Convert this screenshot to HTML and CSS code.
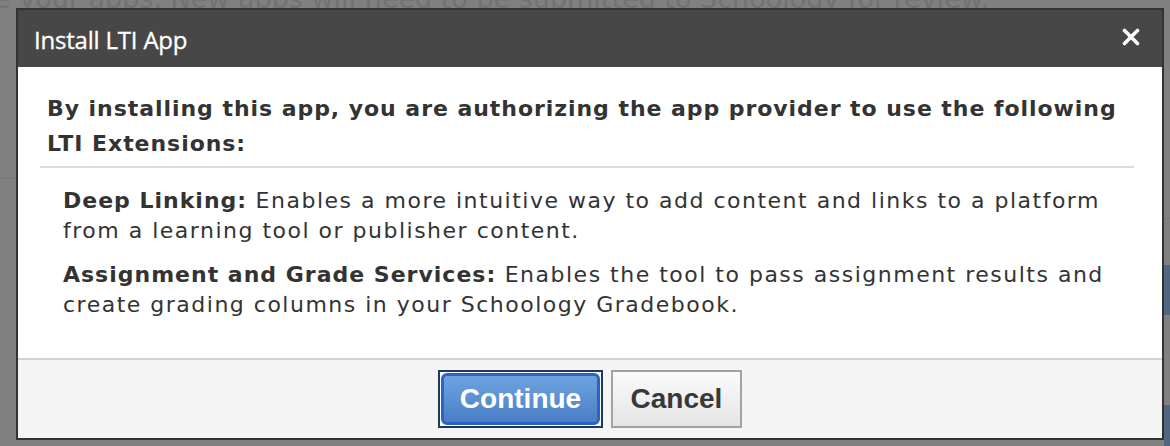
FILE: index.html
```html
<!doctype html>
<html>

<head>
    <meta charset="utf-8">
    <title>Install LTI App</title>
    <link rel="stylesheet" href="styles.css">
</head>

<body>
    <!-- page behind the overlay -->
    <div class="page">
        <p class="page-note">e your apps. New apps will need to be submitted to Schoology for review.</p>
        <div class="page-rule left"></div>
        <div class="page-rule right"></div>
        <div class="page-btn one"></div>
        <div class="page-btn two"></div>
    </div>

    <div class="dialog">
        <div class="dialog-header">
            <span class="dialog-title">Install LTI App</span>
            <a class="dialog-close" href="#close" title="Close">
                <svg width="18" height="18" viewBox="0 0 18 18">
                    <path d="M2.5 2.5 L15.5 15.5 M15.5 2.5 L2.5 15.5" stroke="#fff" stroke-width="3.6" stroke-linecap="round" />
                </svg>
            </a>
        </div>
        <div class="dialog-body">
            <h2 class="dialog-lead">By installing this app, you are authorizing the app provider to use the following LTI Extensions:</h2>
            <ul class="ext-list">
                <li><b>Deep Linking:</b> Enables a more intuitive way to add content and links to a platform from a learning tool or publisher content.</li>
                <li><b>Assignment and Grade Services:</b> Enables the tool to pass assignment results and create grading columns in your Schoology Gradebook.</li>
            </ul>
        </div>
        <div class="dialog-footer">
            <span class="focus-ring"><button class="btn btn-primary" type="button">Continue</button></span>
            <button class="btn btn-cancel" type="button">Cancel</button>
        </div>
    </div>
</body>

</html>
```

FILE: styles.css
```css
html,
body {
    margin: 0;
    height: 100%;
}

body {
    background: #808080;
    font-family: "DejaVu Sans", "Lucida Grande", sans-serif;
    overflow: hidden;
}

/*背景页面*/
.page-note {
    position: absolute;
    left: -6px;
    top: -17px;
    margin: 0;
    font-size: 27px;
    color: #727272;
    white-space: nowrap;
}

.page-rule {
    position: absolute;
    height: 1px;
    background: #777;
}

.page-rule.left {
    left: 0;
    top: 178px;
    width: 16px;
}

.page-rule.right {
    right: 0;
    top: 218px;
    width: 6px;
}

.page-btn {
    position: absolute;
    left: 1164px;
    width: 20px;
    background: #506681;
}

.page-btn.one {
    top: 265px;
    height: 50px;
}

.page-btn.two {
    top: 405px;
    height: 50px;
}

/*弹窗*/
.dialog {
    position: absolute;
    left: 16px;
    top: 8px;
    width: 1144px;
    height: 428px;
    border: 2px solid #333;
    background: #fff;
    display: flex;
    flex-direction: column;
}

.dialog-header {
    height: 57px;
    background: #474747;
    display: flex;
    align-items: center;
    justify-content: space-between;
    padding: 0 22px 0 16px;
}

.dialog-title {
    font-family: "Open Sans", sans-serif;
    font-size: 24px;
    letter-spacing: -0.2px;
    color: #fff;
    padding-top: 1px;
    -webkit-text-stroke: 0.3px #fff;
}

.dialog-close {
    display: block;
    height: 18px;
    margin-top: -4px;
}

.dialog-body {
    flex: 1;
    padding: 24px 28px 0 22px;
    color: #333;
}

.dialog-lead {
    margin: 0;
    padding: 0 7px 5px;
    font-size: 22px;
    line-height: 35px;
    letter-spacing: 0.95px;
    border-bottom: 2px solid #dcdcdc;
}

.ext-list {
    list-style: none;
    margin: 0;
    padding: 18px 0 0 23px;
}

.ext-list li {
    font-size: 22px;
    line-height: 30px;
    letter-spacing: 1.5px;
    margin-bottom: 14px;
}

.ext-list b {
    letter-spacing: 1px;
}

.dialog-footer {
    height: 78px;
    border-top: 2px solid #d2d2d2;
    background: #f4f4f4;
    display: flex;
    justify-content: center;
    align-items: center;
    gap: 8px;
}

.btn {
    font-family: "Liberation Sans", Arial, sans-serif;
    font-size: 28px;
    font-weight: bold;
    cursor: pointer;
}

.focus-ring {
    display: block;
    border: 2px solid #1c3b5a;
    padding: 1px;
    background: #fff;
}

.btn-primary {
    display: block;
    width: 159px;
    height: 52px;
    border: 3px solid #2f62c4;
    border-radius: 6px;
    background: linear-gradient(#6ca3de, #4b7fc6);
    color: #fff;
}

.btn-cancel {
    width: 131px;
    height: 58px;
    border: 2px solid #a2a2a2;
    background: linear-gradient(#fbfbfb, #e4e4e4);
    color: #383838;
}
```
